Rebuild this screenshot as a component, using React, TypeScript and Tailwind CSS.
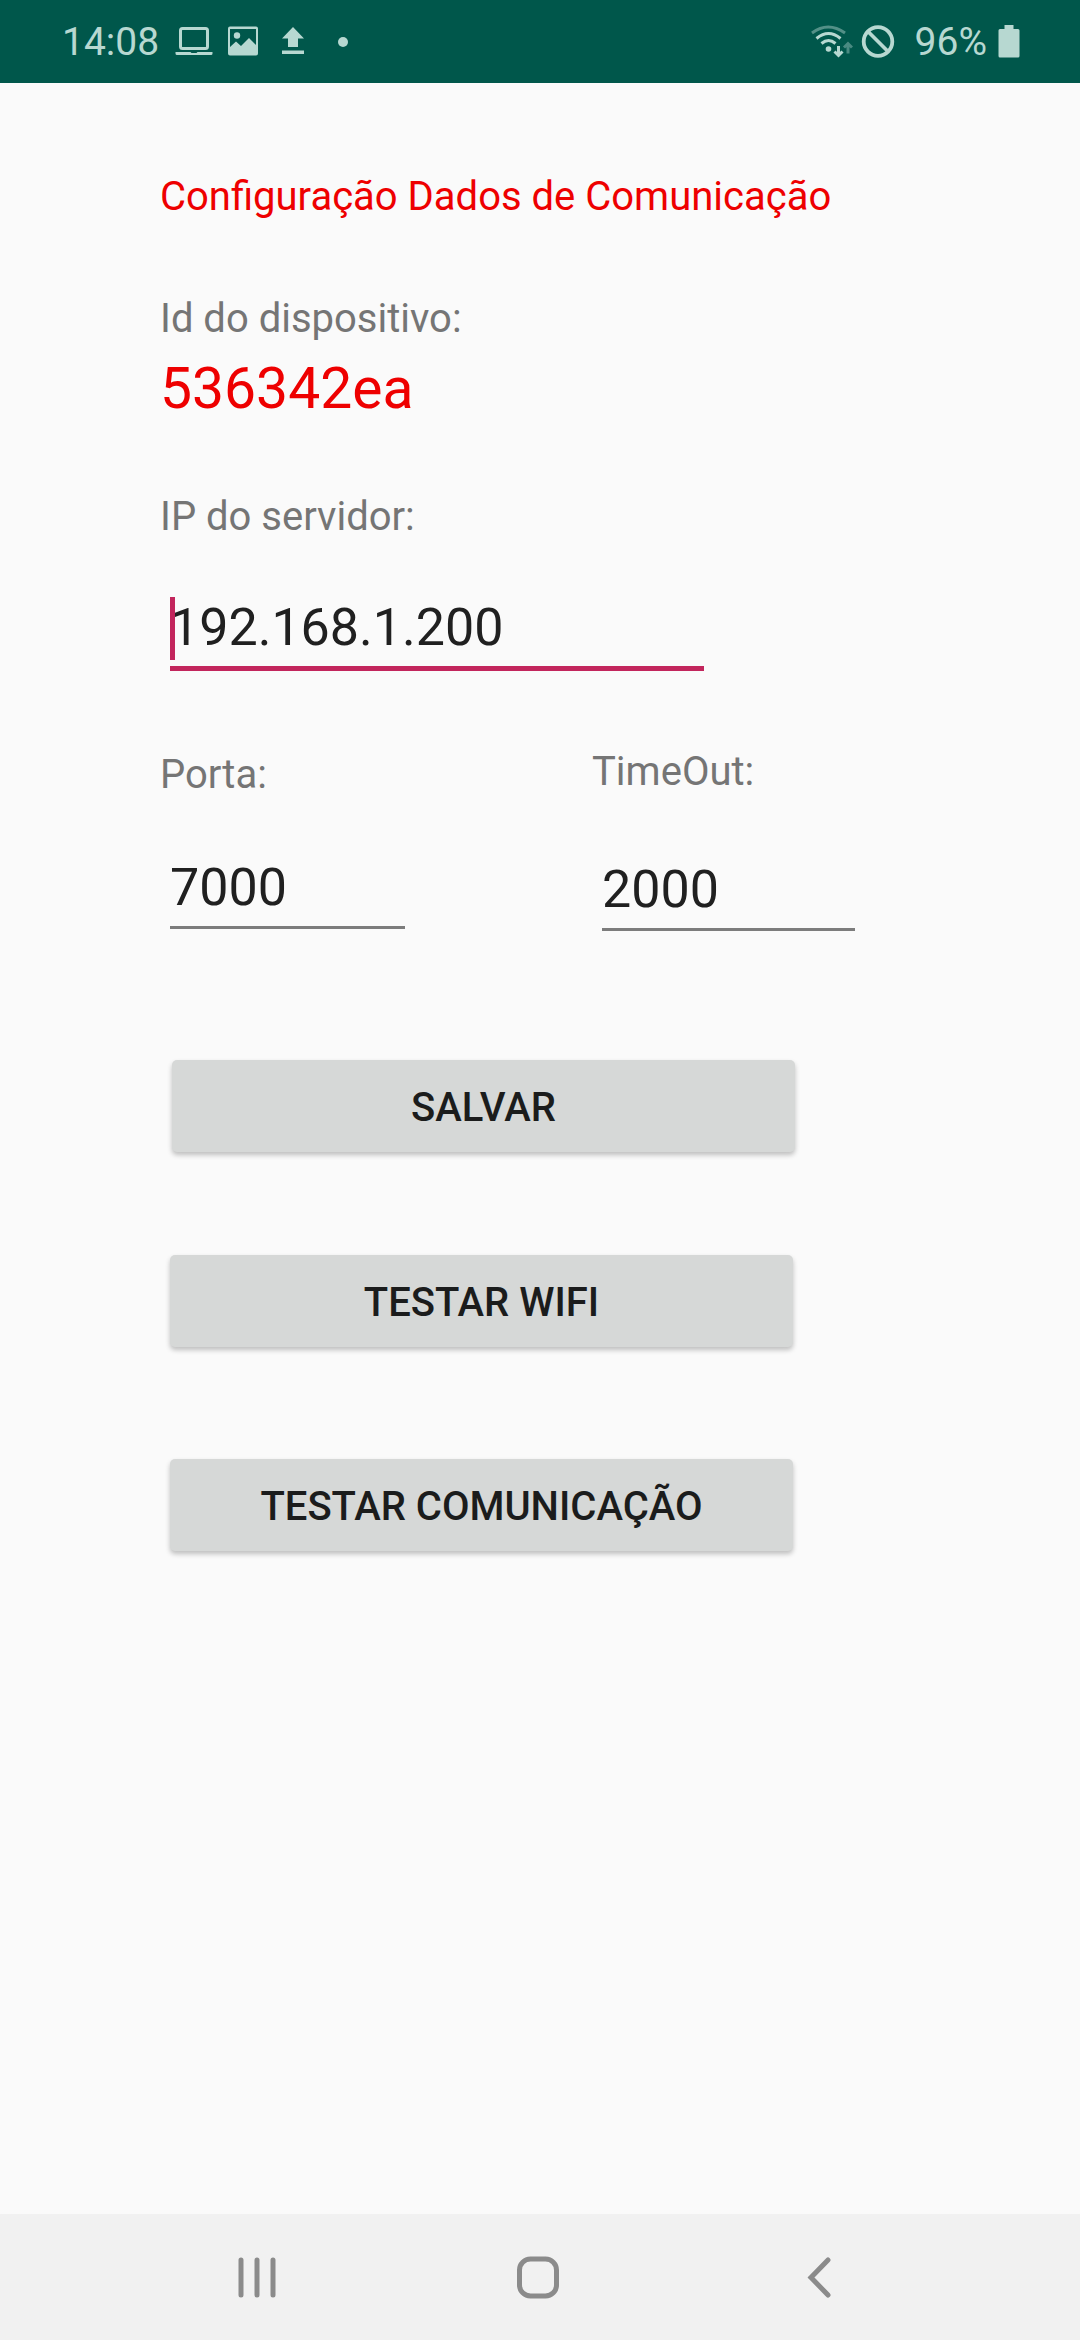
import React from "react";

function StatusBar() {
  return (
    <header className="flex h-[83px] shrink-0 items-center justify-between bg-[#00574b] pr-[60px] pl-[62px] text-[39px] leading-[46px] text-[#b7d8d1]">
      <div className="flex items-center">
        <span>14:08</span>
        <svg className="ml-4 h-8 w-[38px]" viewBox="0 0 38 32" fill="none" aria-label="Laptop">
          <rect x="5.5" y="2.5" width="27" height="20" rx="2" stroke="currentColor" strokeWidth="3" />
          <path d="M.5 26h15l1 1h5l1-1h15v1.500q0 1.500-1.500 1.500h-34q-1.500 0-1.500-1.500z" fill="currentColor" />
        </svg>
        <svg className="ml-[14px] h-8 w-8" viewBox="0 0 32 32" aria-label="Imagem">
          <path
            fillRule="evenodd"
            d="M3 0.500h26a2 2 0 0 1 2 2v25a2 2 0 0 1-2 2H3a2 2 0 0 1-2-2V2.500a2 2 0 0 1 2-2zM3 3v18l6-5.500 5 4.500 8-8 7 7V3z"
            fill="currentColor"
          />
          <circle cx="10" cy="9.500" r="3.200" fill="currentColor" />
        </svg>
        <svg className="ml-[22px] h-8 w-6" viewBox="0 0 24 32" fill="currentColor" aria-label="Envio">
          <path d="M12 1l11 11.500h-6V21H7v-8.500H1zM1 24.500h22v3.500H1z" />
        </svg>
        <span className="ml-[33px] h-[10px] w-[10px] rounded-full bg-[#b7d8d1]" />
      </div>
      <div className="flex items-center">
        <svg className="h-9 w-[42px]" viewBox="0 0 42 36" fill="none" stroke="currentColor" aria-label="Wi-Fi">
          <path d="M1 9q16-12 33 0" strokeWidth="3" opacity=".45" />
          <path d="M5.500 14.500q12-10 24 0M10.500 19.500q7-6 14 0" strokeWidth="3" />
          <circle cx="17.500" cy="25" r="2.800" fill="currentColor" stroke="none" />
          <path d="M27.500 22v9.500M23.500 27.500l4 4 4-4" strokeWidth="3" />
          <path d="M37 29.500V20M33 23.500l4-4 4 4" strokeWidth="3" opacity=".4" />
        </svg>
        <svg className="ml-2 h-9 w-[34px]" viewBox="0 0 34 36" fill="none" stroke="currentColor" strokeWidth="3.800" aria-label="Bloqueado">
          <circle cx="17" cy="17.500" r="14.300" />
          <path d="M7 7.500l20 20" />
        </svg>
        <span className="ml-5">96%</span>
        <svg className="ml-[11px] h-9 w-[22px]" viewBox="0 0 22 36" fill="currentColor" aria-label="Bateria">
          <path d="M6.500 1h9v4H20q1.500 0 1.500 1.500V32q0 1.500-1.500 1.500H2Q.5 33.500.5 32V6.500Q.5 5 2 5h4.500z" />
        </svg>
      </div>
    </header>
  );
}

const label = "block text-[40px] leading-[48px] text-[#757575]";
const input = "block h-[71px] w-full rounded-none bg-transparent pb-[7px] text-[52px] leading-[64px] text-[#202020] outline-none";
const button =
  "h-[92px] w-full max-w-[623px] rounded-[5px] bg-[#d6d8d7] pt-1 text-[40px] leading-[48px] font-medium text-[#1b1c1c] shadow-[0_3px_5px_rgba(0,0,0,0.24)]";

function NavigationBar() {
  return (
    <nav className="flex h-[126px] shrink-0 items-center justify-between bg-[#f1f1f1] pr-[240px] pl-[236px] text-[#8b8b8b]">
      <button type="button" aria-label="Recentes">
        <svg className="h-11 w-11" viewBox="0 0 44 44" stroke="currentColor" strokeWidth="5" strokeLinecap="round">
          <path d="M5 5v35M21 5v35M37 5v35" />
        </svg>
      </button>
      <button type="button" aria-label="Início">
        <svg className="h-11 w-11" viewBox="0 0 44 44" fill="none" stroke="currentColor" strokeWidth="5">
          <rect x="3.500" y="4" width="37" height="37" rx="11" />
        </svg>
      </button>
      <button type="button" aria-label="Voltar">
        <svg className="h-11 w-11" viewBox="0 0 44 44" fill="none" stroke="currentColor" strokeWidth="5" strokeLinecap="round">
          <path d="M32 5l-17 17.500 17 17.500" />
        </svg>
      </button>
    </nav>
  );
}

export default function App() {
  return (
    <div className="flex min-h-screen flex-col bg-[#fafafa] font-['Roboto',sans-serif]">
      <StatusBar />
      <main className="flex-1 px-40 pt-[90px]">
        <h1 className="text-[40px] leading-[48px] text-[#ee0000]">Configuração Dados de Comunicação</h1>

        <p className="mt-[74px] text-[40px] leading-[48px] text-[#757575]">Id do dispositivo:</p>
        <p className="mt-3 text-[57px] leading-[68px] text-[#ee0000]">536342ea</p>

        <form className="mt-[70px]" onSubmit={(e) => e.preventDefault()}>
          <label htmlFor="ip" className={label}>IP do servidor:</label>
          <div className="relative mt-[54px] ml-[10px] max-w-[534px] border-b-[5px] border-[#c2255c]">
            <input id="ip" type="text" defaultValue="192.168.1.200" className={input} />
            <span className="absolute top-0.5 left-0 h-[63px] w-[5px] bg-[#c2255c]" />
          </div>

          <div className="mt-[77px] grid grid-cols-[432fr_328fr]">
            <div className="pt-[3px]">
              <label htmlFor="porta" className={label}>Porta:</label>
              <div className="mt-14 ml-[10px] max-w-[235px] border-b-[3px] border-[#7c7c7c]">
                <input id="porta" type="text" defaultValue="7000" className={input} />
              </div>
            </div>
            <div>
              <label htmlFor="timeout" className={label}>TimeOut:</label>
              <div className="mt-[61px] ml-[10px] max-w-[253px] border-b-[3px] border-[#7c7c7c]">
                <input id="timeout" type="text" defaultValue="2000" className={input} />
              </div>
            </div>
          </div>

          <div className="mt-[129px] flex flex-col pl-[10px]">
            <button type="submit" className={`${button} ml-[2px]`}>SALVAR</button>
            <button type="button" className={`${button} mt-[103px]`}>TESTAR WIFI</button>
            <button type="button" className={`${button} mt-28`}>TESTAR COMUNICAÇÃO</button>
          </div>
        </form>
      </main>
      <NavigationBar />
    </div>
  );
}
